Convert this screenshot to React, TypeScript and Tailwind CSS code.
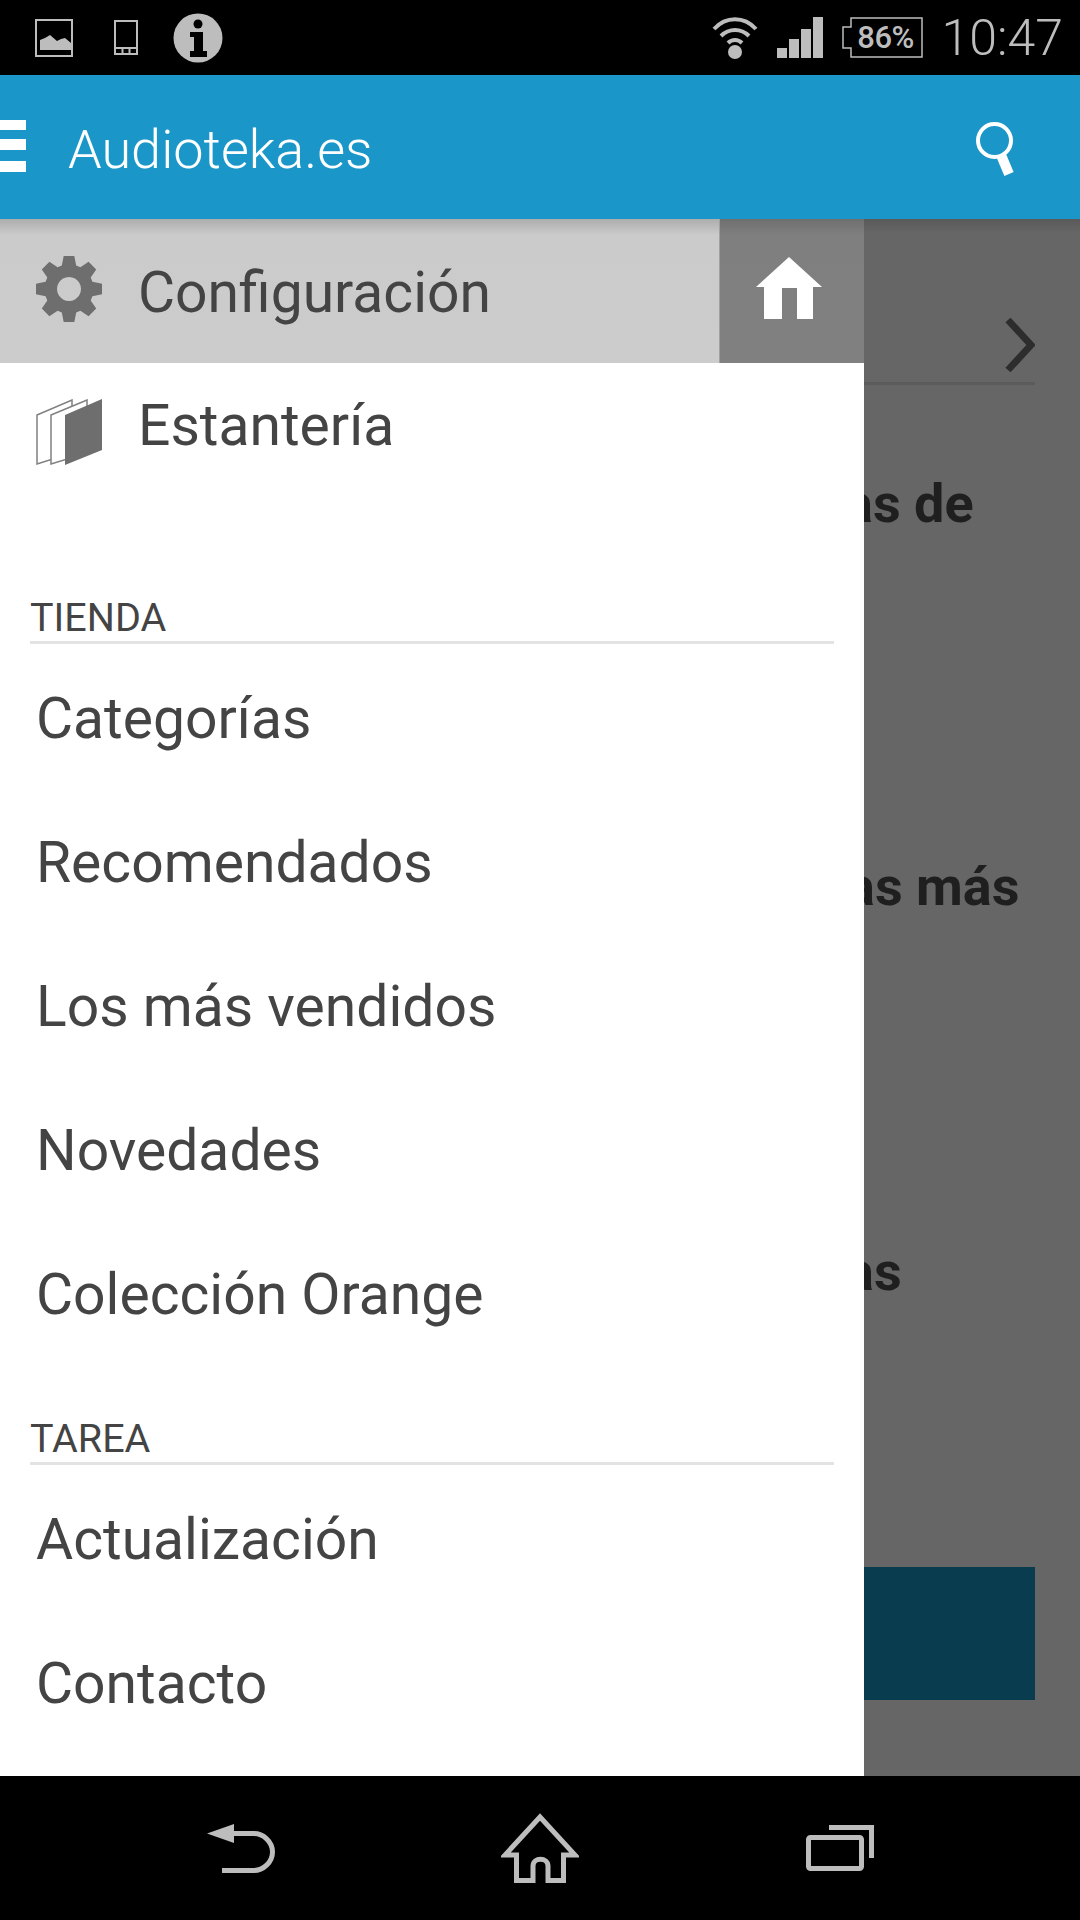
const ICON = "#bdbdbd";

// eight flat teeth round a 66x66 box, with the hole cut by evenodd
const gearPoints = Array.from({ length: 8 }).flatMap((_, i) => {
  const a = (i * Math.PI) / 4 - Math.PI / 2;
  const at = (r: number, d: number) => `${(33 + r * Math.cos(a + d)).toFixed(1)} ${(33 + r * Math.sin(a + d)).toFixed(1)}`;
  return [at(24.500, -0.3), at(33.500, -0.16), at(33.500, 0.16), at(24.500, 0.3)];
});
const gearPath = `M${gearPoints.join("L")}zM33 21a12 12 0 1 0 .01 0z`;

function StatusBar() {
  return (
    <div className="h-[75px] bg-black flex items-center text-[#bdbdbd]">
      <svg className="ml-[35px] w-[38px] h-[38px]" viewBox="0 0 38 38">
        <rect x="1" y="1" width="36" height="36" fill="none" stroke={ICON} strokeWidth="2" />
        <path d="M5 31V21l5-2 5-3 7 6 4-2 4-1 6 5v7z" fill={ICON} />
      </svg>
      <svg className="ml-[41px] w-[24px] h-[35px]" viewBox="0 0 24 35">
        <rect x="1" y="1" width="22" height="33" fill="none" stroke={ICON} strokeWidth="2" />
        <path d="M1 28h22M8.500 28v6M15.500 28v6" stroke={ICON} strokeWidth="2" />
      </svg>
      <svg className="ml-[35px] w-[50px] h-[50px]" viewBox="0 0 50 50">
        <circle cx="25" cy="25" r="24.500" fill={ICON} />
        <circle cx="25" cy="11" r="4.500" fill="#000" />
        <path d="M17 19h13v19h4v6H17v-6h4V24h-4z" fill="#000" />
      </svg>

      <svg className="ml-auto w-[46px] h-[44px]" viewBox="0 0 46 44">
        <g fill="none" stroke={ICON} strokeWidth="4">
          <path d="M2 13C14 0 32 0 44 13" />
          <path d="M9 20c8-8 20-8 28 0" />
          <path d="M16 27c4-4 10-4 14 0" />
        </g>
        <circle cx="23" cy="36" r="7" fill={ICON} />
      </svg>
      <svg className="ml-[19px] w-[46px] h-[41px]" viewBox="0 0 46 41">
        <path d="M0 31h10v10H0zM12 22h10v19H12zM24 12h10v29H24zM36 0h10v41H36z" fill={ICON} />
      </svg>
      <div className="ml-[19px] w-[81px] h-[41px] relative">
        <svg className="absolute inset-0" width="81" height="41" viewBox="0 0 81 41">
          <path d="M9 1h71v39H9v-9H1V10h8z" fill="none" stroke={ICON} strokeWidth="1.500" />
        </svg>
        <span className="absolute inset-0 pl-[7px] flex items-center justify-center font-['Roboto',sans-serif] font-medium text-[31px] leading-none tracking-[-0.5px]">86%</span>
      </div>
      <span className="ml-[19px] mr-[17px] font-['Roboto',sans-serif] font-light text-[50px] leading-none">10:47</span>
    </div>
  );
}

function AppBar() {
  return (
    <div className="h-[144px] bg-[#1a97c8] flex items-center text-white">
      <div className="w-[26px] -mt-[2px] flex flex-col">
        <div className="h-[10px] bg-white" />
        <div className="h-[11px] mt-[9px] bg-white" />
        <div className="h-[11px] mt-[11px] bg-white" />
      </div>
      <span className="ml-[42px] pt-[5px] font-['Roboto',sans-serif] font-light text-[54px] leading-none">Audioteka.es</span>
      <svg className="ml-auto mr-[64px] w-[40px] h-[54px] mt-[3px]" viewBox="0 0 40 54">
        <circle cx="18.500" cy="18.500" r="16.500" fill="none" stroke="#fff" strokeWidth="4" />
        <path d="M25 33l8 19" stroke="#fff" strokeWidth="10" />
      </svg>
    </div>
  );
}

function NavBar() {
  return (
    <div className="h-[144px] bg-black relative">
      <svg className="absolute left-[207px] top-[48px] w-[68px] h-[49px]" viewBox="0 0 68 49" fill="none">
        <path d="M0 9.500L27 0v19z" fill={ICON} />
        <path d="M27 9.500h20c9 0 18.500 8 18.500 18.500S56 46.500 47 46.500H15" stroke={ICON} strokeWidth="5" />
      </svg>
      <svg className="absolute left-[501px] top-[37px] w-[78px] h-[70px]" viewBox="0 0 78 70" fill="none">
        <path d="M39 4L4 42h11.500v25.500H32V53c0-9 15-9 15 0v14.500h15.500V42H74z" stroke={ICON} strokeWidth="5" />
      </svg>
      <svg className="absolute left-[806px] top-[49px] w-[68px] h-[46px]" viewBox="0 0 68 46" fill="none">
        <path d="M23 2.500h42.500V33" stroke={ICON} strokeWidth="5" />
        <rect x="2.500" y="12.500" width="53" height="31" rx="2" stroke={ICON} strokeWidth="5" />
      </svg>
    </div>
  );
}

function SectionTitle({ title }: { title: string }) {
  return (
    <div className="mx-[30px] h-[50px] border-b-[3px] border-[#e3e3e3] flex items-center text-[39.500px] leading-none text-[#444]">
      {title}
    </div>
  );
}

function MenuItem({ label }: { label: string }) {
  return <div className="h-[144px] pl-[36px] pt-[4px] flex items-center text-[57px] leading-none text-[#444]">{label}</div>;
}

function Drawer() {
  return (
    <div className="w-[864px] bg-white font-['Roboto',sans-serif] flex flex-col">
      <div className="h-[144px] flex">
        <div className="w-[719px] pl-[36px] flex items-center gap-[36px] bg-[linear-gradient(#adadad,#cbcbcb_16px,#cccccc)]">
          <svg className="w-[66px] h-[66px] -mt-[5px]" viewBox="0 0 66 66">
            <path fillRule="evenodd" fill="#6e6e6e" d={gearPath} />
          </svg>
          <span className="text-[57px] leading-none text-[#444] pt-[2px]">Configuración</span>
        </div>
        <div className="w-[145px] pl-[36px] pt-[38px] bg-[linear-gradient(#6f6f6f,#7f7f7f_16px,#808080)] border-l border-[#a0a0a0]">
          <svg className="w-[66px] h-[62px]" viewBox="0 0 66 62">
            <path d="M33 0L66 30H57V62H41V31H26V62H8V30H0z" fill="#fff" />
          </svg>
        </div>
      </div>
      <div className="h-[231px] pt-[36px] pl-[36px] flex items-start gap-[36px]">
        <svg className="w-[66px] h-[66px]" viewBox="0 0 66 66">
          <path d="M1 16L36 1v53L1 65z" fill="#fff" stroke="#808080" strokeWidth="1.500" />
          <path d="M15 16L51 1v53L15 65z" fill="#fff" stroke="#808080" strokeWidth="1.500" />
          <path d="M29 16L66 0v51L29 66z" fill="#6e6e6e" />
        </svg>
        <span className="text-[57px] leading-[52px] pt-[1px] text-[#444]">Estantería</span>
      </div>
      <SectionTitle title="TIENDA" />
      <MenuItem label="Categorías" />
      <MenuItem label="Recomendados" />
      <MenuItem label="Los más vendidos" />
      <MenuItem label="Novedades" />
      <MenuItem label="Colección Orange" />
      <div className="h-[51px]" />
      <SectionTitle title="TAREA" />
      <MenuItem label="Actualización" />
      <MenuItem label="Contacto" />
    </div>
  );
}

function BehindContent() {
  return (
    <div className="flex-1 overflow-hidden font-['Roboto',sans-serif] bg-[linear-gradient(#5a5a5a,#666666_14px,#666666)]">
      <div className="mr-[45px] h-[166px] border-b-[3px] border-[#5b5b5b] flex items-end justify-end pb-[9px]">
        <svg className="w-[30px] h-[56px]" viewBox="0 0 30 56" fill="none">
          <path d="M3 3l23 25L3 53" stroke="#2d2d2d" strokeWidth="7" />
        </svg>
      </div>
      <div className="h-[383px] pt-[89px] -ml-[20px] text-[54px] leading-[60px] font-bold text-[#1f1f1f]">as de</div>
      <div className="h-[383px] pt-[89px] -ml-[18px] text-[54px] leading-[60px] font-bold text-[#1f1f1f]">as más</div>
      <div className="h-[383px] pt-[91px] -ml-[19px] text-[54px] leading-[60px] font-bold text-[#1f1f1f]">as</div>
      <div className="mt-[33px] mr-[45px] h-[133px] bg-[#0a3c50]" />
    </div>
  );
}

export default function App() {
  return (
    <div className="w-[1080px] h-[1920px] flex flex-col overflow-hidden">
      <StatusBar />
      <AppBar />
      <div className="h-[1557px] flex">
        <Drawer />
        <BehindContent />
      </div>
      <NavBar />
    </div>
  );
}
